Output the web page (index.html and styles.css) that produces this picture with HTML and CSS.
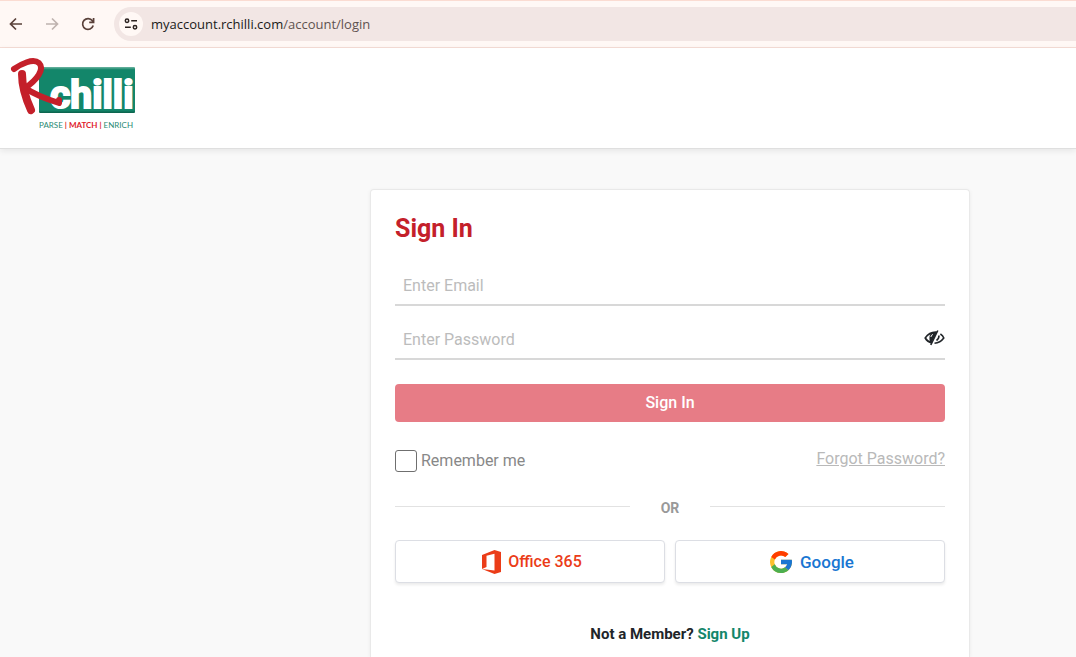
FILE: index.html
```html
<!DOCTYPE html>
<html lang="en">
<head>
    <meta charset="UTF-8">
    <meta name="viewport" content="width=device-width, initial-scale=1.0">
    <title>Sign In</title>
    <link rel="stylesheet" href="styles.css">
</head>
<body>
    <div class="browser-bar">
        <button class="browser-button" aria-label="Back">
            <svg width="16" height="16" viewBox="0 0 16 16"><path d="M14 8H3M8 2.5L2.5 8L8 13.5" /></svg>
        </button>
        <button class="browser-button" aria-label="Forward" disabled>
            <svg width="16" height="16" viewBox="0 0 16 16"><path d="M2 8h11M8 2.5L13.5 8L8 13.5" /></svg>
        </button>
        <button class="browser-button" aria-label="Reload">
            <svg width="16" height="16" viewBox="0 0 16 16"><path d="M13.2 9.5A5.4 5.4 0 1 1 12.4 4.8L13.4 6M13.6 2v4.4H9.2" /></svg>
        </button>
        <div class="address-bar">
            <button class="site-info" aria-label="Site information">
                <svg width="14" height="14" viewBox="0 0 14 14">
                    <circle cx="3" cy="3.7" r="1.7" />
                    <path d="M7.2 3.7H13M1 10.3h5.8" />
                    <circle cx="11" cy="10.3" r="1.7" />
                </svg>
            </button>
            <span class="url">myaccount.rchilli.com<span class="url-path">/account/login</span></span>
        </div>
    </div>

    <header class="header">
        <a class="logo" href="#" aria-label="RChilli">
            <svg width="128" height="74" viewBox="0 0 128 74">
                <defs>
                    <linearGradient id="panel" x1="0" y1="0" x2="0" y2="1">
                        <stop offset="0" stop-color="#6fb5a2" />
                        <stop offset="0.06" stop-color="#13866a" />
                        <stop offset="0.94" stop-color="#13866a" />
                        <stop offset="1" stop-color="#0b5f4a" />
                    </linearGradient>
                </defs>
                <rect x="31" y="10" width="96" height="46" rx="1" fill="url(#panel)" />
                <text class="logo-name" x="42" y="51">chilli</text>
                <!-- brush stroke -->
                <path class="brush" d="M6 12C13 7 25 1 31 6C37 12 29 23 17 31C26 37 38 42 51 46V43" />
                <path class="brush brush-stem" d="M14 17C14 30 18 42 23 53" />
                <text class="logo-tag" x="31" y="71">PARSE <tspan class="red">| MATCH |</tspan> ENRICH</text>
            </svg>
        </a>
    </header>

    <main class="main">
        <form class="card">
            <h1 class="title">Sign In</h1>
            <div class="field">
                <input class="field-input" type="email" placeholder="Enter Email" aria-label="Email">
            </div>
            <div class="field">
                <input class="field-input" type="password" placeholder="Enter Password" aria-label="Password">
                <button class="toggle-password" type="button" aria-label="Show password">
                    <svg width="22" height="18" viewBox="0 0 22 18">
                        <path class="eye-line" d="M9 14C5.8 13.2 3.5 11.3 2.2 9C5.4 4.3 9.5 2.8 14 3.2M17.4 5C19 6 20.2 7.4 20.8 9C18.6 12 15.5 14 11.5 14.3" />
                        <path class="eye-fill" d="M14 3L8 14.7C6 12.6 5.6 6 8.5 3.8Z" />
                        <path class="eye-line" d="M14.8 1.5L7.8 16M16 6.5C16 9 15 10.5 13.5 11.5" />
                        <path class="eye-shine" d="M8 8C8 6.5 8.8 5.7 10 5.6" />
                    </svg>
                </button>
            </div>
            <button class="submit" type="button">Sign In</button>
            <div class="options">
                <label class="remember"><input class="checkbox" type="checkbox"> Remember me</label>
                <a class="forgot" href="#">Forgot Password?</a>
            </div>
            <div class="divider"><span class="divider-text">OR</span></div>
            <div class="providers">
                <button class="provider office" type="button">
                    <svg width="20" height="24" viewBox="0 0 20 24">
                        <path fill="#eb3c18" d="M0 5L12.5 0L19 2V22L12.5 24L0 19L12.5 20.5V3.8L4.5 5.8V17L0 19Z" />
                    </svg>
                    Office 365
                </button>
                <button class="provider google" type="button">
                    <svg width="22" height="22" viewBox="4 4 40 40">
                        <path fill="#fbc02d" d="M43.6 20H24v8h11.3A12 12 0 1 1 31.9 15.1l5.7-5.7A20 20 0 1 0 43.6 20Z" />
                        <path fill="#ff3d00" d="M6.3 14.7l6.6 4.8A12 12 0 0 1 31.9 15.1l5.7-5.7A20 20 0 0 0 6.3 14.7Z" />
                        <path fill="#4caf50" d="M24 44c5.2 0 9.9-2 13.4-5.2l-6.2-5.2A12 12 0 0 1 12.7 28l-6.5 5A20 20 0 0 0 24 44Z" />
                        <path fill="#1976d2" d="M43.6 20H24v8h11.3a12 12 0 0 1-4.1 5.6l6.2 5.2C37 39.2 44 34 44 24c0-1.3-.1-2.7-.4-4Z" />
                    </svg>
                    Google
                </button>
            </div>
            <p class="signup">Not a Member? <a class="signup-link" href="#">Sign Up</a></p>
        </form>
    </main>
</body>
</html>
```
FILE: styles.css
```css
* {
    margin: 0;
    padding: 0;
    box-sizing: border-box;
}

body {
    min-height: 100vh;
    display: flex;
    flex-direction: column;
    background: #f9f9f9;
    color: #212529;
    font-family: Roboto, "Liberation Sans", sans-serif;
    font-size: 16px;
    line-height: 24px;
}

button {
    border: none;
    background: none;
    font-family: inherit;
    cursor: pointer;
}

svg {
    display: block;
}

/* browser bar */
.browser-bar {
    display: flex;
    align-items: center;
    gap: 20px;
    height: 48px;
    padding-left: 8px;
    background: #fff8f5;
    border-top: 1px solid #fbdcd2;
    border-bottom: 1px solid #f5ddd6;
}

.browser-button svg,
.site-info svg {
    fill: none;
    stroke: #5a413a;
    stroke-width: 1.7;
}

.browser-button:disabled svg {
    stroke: #bfb3af;
}

.address-bar {
    flex: 1;
    display: flex;
    align-items: center;
    gap: 8px;
    height: 34px;
    margin-left: -2px;
    padding-left: 5px;
    background: #f2e6e4;
    border-radius: 17px 0 0 17px;
}

.site-info {
    display: flex;
    align-items: center;
    justify-content: center;
    width: 24px;
    height: 24px;
    border-radius: 50%;
    background: #fff8f5;
}

.site-info svg {
    stroke: #2b2220;
    stroke-width: 1.5;
}

.url {
    color: #201a19;
    font-family: "Open Sans", "Noto Sans", sans-serif;
    font-size: 13px;
}

.url-path {
    color: #5f5350;
}

/* header */
.header {
    height: 101px;
    padding: 9px 8px;
    background: #fff;
    border-bottom: 1px solid #dfdfdf;
    box-shadow: 0 2px 6px rgba(0, 0, 0, 0.08);
}

.logo {
    display: inline-block;
}

.logo-name {
    fill: #fff;
    stroke: #fff;
    stroke-width: 2;
    font-family: Roboto, "Liberation Sans", sans-serif;
    font-size: 39px;
    font-weight: 700;
}

.logo-tag {
    fill: #2a8a73;
    font-family: Lato, "Liberation Sans", sans-serif;
    font-size: 8px;
}

.red {
    fill: #e0202a;
    font-weight: bold;
}

.brush {
    fill: none;
    stroke: #c4202a;
    stroke-width: 6;
    stroke-linecap: round;
    stroke-linejoin: round;
}

.brush-stem {
    stroke-width: 8;
}

/* sign in card */
.main {
    flex: 1;
    display: flex;
    justify-content: flex-end;
    padding: 40px 106px 0 24px;
}

.card {
    width: 100%;
    max-width: 600px;
    padding: 25px 24px 0;
    background: #fff;
    border: 1px solid #e9e9e9;
    border-bottom: none;
    border-radius: 4px 4px 0 0;
    box-shadow: 0 1px 4px rgba(0, 0, 0, 0.06);
}

.title {
    margin-bottom: 23px;
    color: #c4202a;
    font-size: 25px;
    font-weight: 700;
    line-height: 28px;
}

.field {
    position: relative;
    margin-bottom: 14px;
}

.field-input {
    display: block;
    width: 100%;
    height: 40px;
    padding: 0 32px 0 8px;
    border: none;
    border-bottom: 2px solid #d8d8d8;
    outline: none;
    background: transparent;
    font-family: inherit;
    font-size: 16px;
}

.field-input::placeholder {
    color: #bcbcbc;
}

.toggle-password {
    position: absolute;
    top: 9px;
    right: 0;
}

.eye-line {
    fill: none;
    stroke: #212529;
    stroke-width: 1.6;
}

.eye-fill {
    fill: #212529;
}

.eye-shine {
    fill: none;
    stroke: #fff;
    stroke-width: 1;
}

.submit {
    width: 100%;
    height: 38px;
    margin-top: 10px;
    padding-bottom: 2px;
    border-radius: 4px;
    background: #e77c86;
    color: #fff;
    font-size: 16px;
    font-weight: 500;
}

.options {
    display: flex;
    justify-content: space-between;
    margin-top: 25px;
    color: #888;
}

.remember {
    display: flex;
    align-items: center;
    gap: 4px;
    padding-top: 2px;
}

.checkbox {
    appearance: none;
    width: 22px;
    height: 22px;
    border: 1px solid #6f6f6f;
    border-radius: 3px;
    background: #fff;
}

.forgot {
    color: #b9b9b9;
}

.divider {
    display: flex;
    align-items: center;
    gap: 31px;
    margin-top: 20px;
}

.divider::before,
.divider::after {
    content: "";
    flex: 1;
    height: 1px;
    background: #e2e2e2;
}

.divider-text {
    padding-top: 3px;
    color: #999;
    font-size: 14px;
    font-weight: 700;
}

.providers {
    display: flex;
    gap: 10px;
    margin-top: 20px;
}

.provider {
    flex: 1;
    display: flex;
    align-items: center;
    justify-content: center;
    gap: 6px;
    height: 43px;
    border: 1px solid #dcdee4;
    border-radius: 4px;
    background: #fff;
    box-shadow: 0 2px 3px rgba(0, 0, 0, 0.08);
    font-size: 16px;
    font-weight: 500;
}

.office {
    padding-left: 4px;
    color: #eb3c18;
}

.google {
    gap: 8px;
    padding-left: 4px;
    color: #1976d2;
    font-size: 17px;
}

.signup {
    margin-top: 39px;
    font-size: 15px;
    font-weight: 700;
    text-align: center;
}

.signup-link {
    color: #13866a;
    text-decoration: none;
}
```
